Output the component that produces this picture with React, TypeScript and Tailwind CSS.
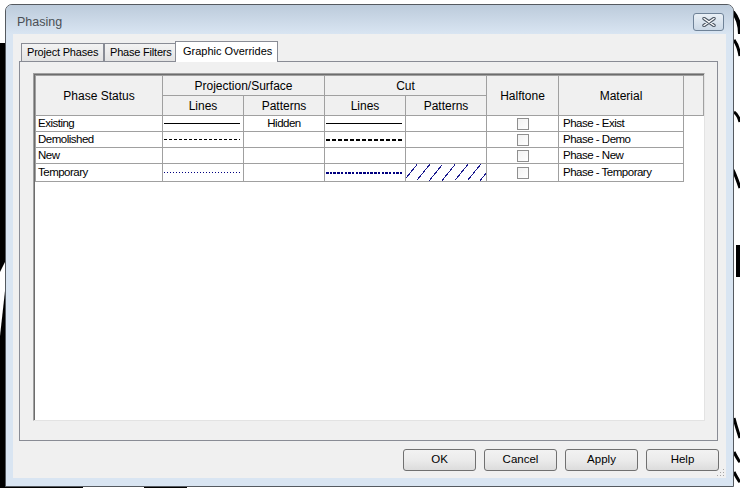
import React from "react";

const Backdrop = () => (
  <svg className="absolute inset-0" width={740} height={488} viewBox="0 0 740 488">
    <rect width={740} height={488} fill="#ffffff" />
    {/* left edge of the drawing behind */}
    <path d="M0 43 H6 V488 H0 Z" fill="#000" />
    <path d="M0 272 L6 260 L6 282 L0 336 Z" fill="#fff" />
    {/* bottom edge */}
    <rect x={0} y={486} width={83} height={2} fill="#000" />
    <rect x={144} y={486} width={43} height={2} fill="#000" />
    {/* right edge fragments */}
    <path d="M733 12 C738 18 740 26 740 34" stroke="#000" strokeWidth={4} fill="none" />
    <path d="M734 40 C737 44 739 50 740 56" stroke="#000" strokeWidth={3} fill="none" />
    <path d="M734 112 C737 114 739 118 740 122" stroke="#000" strokeWidth={3} fill="none" />
    <path d="M733 170 C736 176 738 182 740 188" stroke="#000" strokeWidth={3} fill="none" />
    <rect x={736} y={245} width={4} height={32} fill="#000" />
    <path d="M734 418 C736 426 738 432 740 438" stroke="#000" strokeWidth={3} fill="none" />
    <path d="M734 452 C736 456 738 460 740 462" stroke="#000" strokeWidth={3} fill="none" />
    <path d="M734 472 C736 476 738 480 740 482" stroke="#000" strokeWidth={3} fill="none" />
  </svg>
);

const CloseButton = () => (
  <div className="w-[31px] h-[18px] rounded-[3px] border border-[#6f8297] bg-gradient-to-b from-[#eaf0f6] to-[#cbd8e6] flex items-center justify-center">
    <svg width={14} height={10} viewBox="0 0 14 10">
      <path d="M2 1.5 L12 8.5 M12 1.5 L2 8.5" stroke="#4b5562" strokeWidth={3.4} strokeLinecap="round" />
      <path d="M2 1.5 L12 8.5 M12 1.5 L2 8.5" stroke="#ffffff" strokeWidth={1.4} strokeLinecap="round" />
    </svg>
  </div>
);

type LineProps = { color?: string; width?: number; dash?: string };

const LineSample = ({ color = "#000", width = 1, dash }: LineProps) => (
  <svg width={76} height={4} viewBox="0 0 76 4" className="block">
    <line
      x1={0}
      y1={width === 1 ? 1.5 : 2}
      x2={76}
      y2={width === 1 ? 1.5 : 2}
      stroke={color}
      strokeWidth={width}
      strokeDasharray={dash}
      shapeRendering="crispEdges"
    />
  </svg>
);

const Hatch = () => (
  <svg width={81} height={17} viewBox="0 0 81 17" className="block">
    {Array.from({ length: 8 }).map((_, i) => (
      <line
        key={i}
        x1={-2 + i * 12.7}
        y1={16.5}
        x2={11 + i * 12.7}
        y2={0.5}
        stroke="#1a1a8f"
        strokeWidth={1}
        shapeRendering="crispEdges"
      />
    ))}
  </svg>
);

const CheckBox = () => (
  <div className="mx-auto w-[12px] h-[12px] border border-[#8f8f8f] bg-gradient-to-br from-[#f2f2f2] to-white" />
);

const Tab = ({ label, width, active }: { label: string; width: string; active?: boolean }) => (
  <div
    className={
      active
        ? `${width} h-[21px] -mb-px -ml-px relative z-10 bg-white border border-b-0 border-[#898c95] flex items-center pl-[7px] pb-[2px] text-[11px] whitespace-nowrap text-black`
        : `${width} h-[18px] bg-gradient-to-b from-[#f3f3f3] to-[#e3e3e3] border border-b-0 border-[#898c95] flex items-center pl-[5px] text-[11px] tracking-[-0.2px] whitespace-nowrap text-black`
    }
  >
    {label}
  </div>
);

const ActionButton = ({ label }: { label: string }) => (
  <button
    type="button"
    className="w-[73px] h-[22px] rounded-[3px] border border-[#707070] bg-gradient-to-b from-[#f2f2f2] via-[#ebebeb] to-[#dcdcdc] text-[11.5px] text-black leading-none"
  >
    {label}
  </button>
);

const rows = [
  { name: "Existing", material: "Phase - Exist" },
  { name: "Demolished", material: "Phase - Demo" },
  { name: "New", material: "Phase - New" },
  { name: "Temporary", material: "Phase - Temporary" },
];

const th = "border border-[#a0a0a0] bg-[#f0f0f0] font-normal text-[12px] text-black p-0";
const td = "border border-[#a0a0a0] p-0 h-[16px] text-[11.5px] tracking-[-0.5px] text-black leading-none";

const OverridesTable = () => (
  <table className="table-fixed border-collapse w-[668px]">
    <colgroup>
      <col className="w-[127px]" />
      <col className="w-[81px]" />
      <col className="w-[81px]" />
      <col className="w-[81px]" />
      <col className="w-[81px]" />
      <col className="w-[72px]" />
      <col className="w-[125px]" />
      <col className="w-[20px]" />
    </colgroup>
    <thead>
      <tr className="h-[20px]">
        <th rowSpan={2} className={th}>Phase Status</th>
        <th colSpan={2} className={th}>Projection/Surface</th>
        <th colSpan={2} className={th}>Cut</th>
        <th rowSpan={2} className={th}>Halftone</th>
        <th rowSpan={2} className={th}>Material</th>
        <th rowSpan={2} className={th}></th>
      </tr>
      <tr className="h-[20px]">
        <th className={th}>Lines</th>
        <th className={th}>Patterns</th>
        <th className={th}>Lines</th>
        <th className={th}>Patterns</th>
      </tr>
    </thead>
    <tbody>
      {rows.map((r) => (
        <tr key={r.name} className="h-[16px]">
          <td className={`${td} pl-[2px]`}>{r.name}</td>
          <td className={`${td} pl-[1px]`}>
            {r.name === "Existing" && <LineSample />}
            {r.name === "Demolished" && <LineSample dash="3 2" />}
            {r.name === "Temporary" && <LineSample color="#000080" dash="1 2" />}
          </td>
          <td className={`${td} text-center`}>{r.name === "Existing" ? "Hidden" : ""}</td>
          <td className={`${td} pl-[1px]`}>
            {r.name === "Existing" && <LineSample />}
            {r.name === "Demolished" && <LineSample width={2} dash="4 2" />}
            {r.name === "Temporary" && <LineSample color="#000080" width={2} dash="2.5 1.2" />}
          </td>
          <td className={`${td} overflow-hidden`}>{r.name === "Temporary" && <Hatch />}</td>
          <td className={td}>
            <CheckBox />
          </td>
          <td className={`${td} pl-[4px]`}>{r.material}</td>
          <td className="p-0 border-0 bg-white"></td>
        </tr>
      ))}
    </tbody>
  </table>
);

export default function App() {
  return (
    <div className="relative w-[740px] h-[488px] overflow-hidden pt-[4px] pl-[5px] font-['Liberation_Sans',Arial,sans-serif]">
      <Backdrop />
      <div className="relative w-[729px] h-[483px] border border-[#555a60] rounded-t-[7px] bg-[#d9e5f2] flex flex-col">
        {/* title bar */}
        <div className="h-[29px] shrink-0 rounded-t-[6px] bg-gradient-to-b from-[#bccbdb] to-[#d9e5f2] flex items-start justify-between pt-[8px] pl-[11px] pr-[9px]">
          <span className="text-[12.5px] leading-[18px] text-[#4a4f55]">Phasing</span>
          <CloseButton />
        </div>

        {/* client area */}
        <div className="mx-[7px] h-[444px] bg-[#f0f0f0] flex flex-col pt-[7px] pl-[6px] relative">
          <div className="flex items-end h-[20px] pl-[2px]">
            <Tab label="Project Phases" width="w-[83px]" />
            <Tab label="Phase Filters" width="w-[72px]" />
            <Tab label="Graphic Overrides" width="w-[103px]" active />
          </div>

          <div className="w-[699px] h-[380px] border border-[#898c95] bg-[#f0f0f0] pt-[11px] pl-[13px]">
            <div className="w-[672px] h-[348px] border border-t-[#a0a0a0] border-l-[#a0a0a0] border-r-[#e3e3e3] border-b-[#e3e3e3] bg-white">
              <div className="h-full border-t border-l border-[#6d6d6d]">
                <OverridesTable />
              </div>
            </div>
          </div>

          <div className="flex justify-end gap-[8px] pr-[7px] mt-[8px]">
            <ActionButton label="OK" />
            <ActionButton label="Cancel" />
            <ActionButton label="Apply" />
            <ActionButton label="Help" />
          </div>

          {/* size grip */}
          <svg className="absolute right-[1px] bottom-[1px]" width={8} height={8} viewBox="0 0 8 8">
            {[
              [6, 0],
              [3, 3],
              [6, 3],
              [0, 6],
              [3, 6],
              [6, 6],
            ].map(([x, y], i) => (
              <rect key={i} x={x} y={y} width={1} height={1} fill="#a6a6a6" />
            ))}
          </svg>
        </div>
      </div>
    </div>
  );
}
